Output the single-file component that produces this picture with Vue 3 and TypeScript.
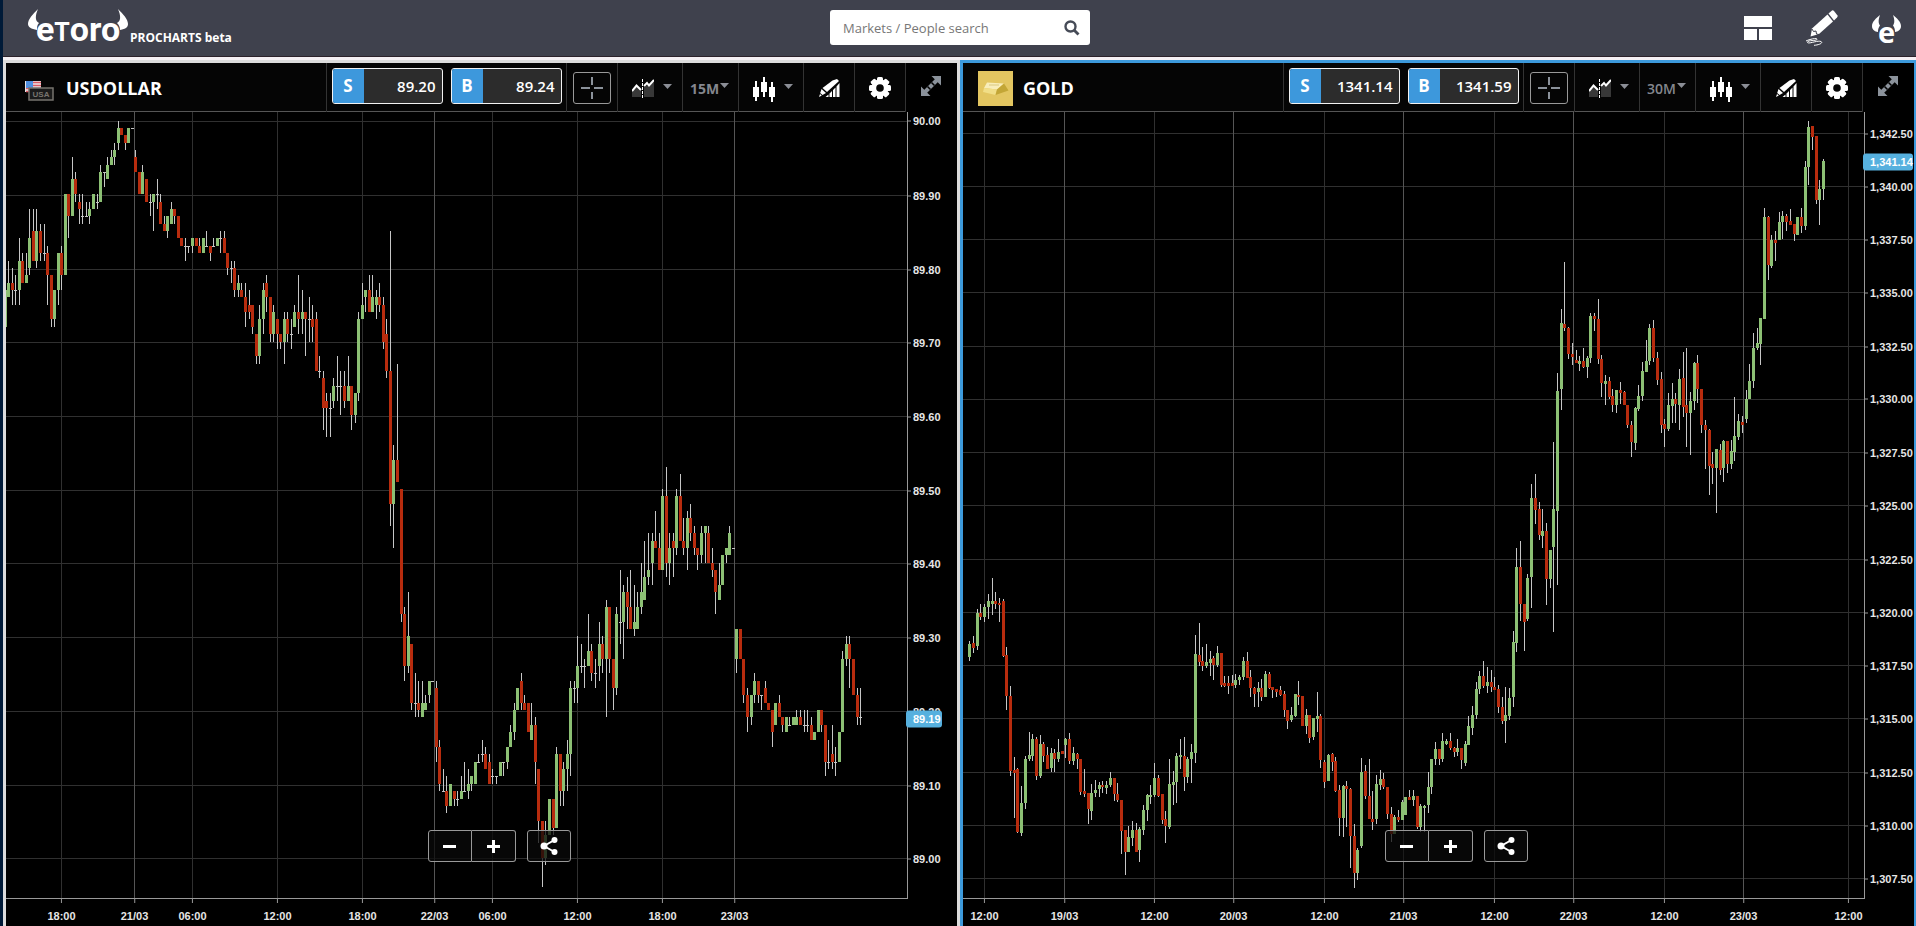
<script setup lang="ts">
import { ref } from 'vue'

interface AxisMark {
  at: number
  text: string
  strong?: boolean
}

interface Bar {
  x: number
  wickY: number
  wickH: number
  bodyY: number
  bodyH: number
  kind: 'up' | 'down' | 'flat'
}

interface Chart {
  id: string
  name: string
  art: 'dollar' | 'gold'
  sell: string
  buy: string
  frame: string
  active: boolean
  times: AxisMark[]
  prices: AxisMark[]
  last: AxisMark
  bars: Bar[]
}

const PLOT_W = 901
const PLOT_H = 786
const frames = ['1M', '5M', '15M', '30M', '1H', '4H', '1D']
const query = ref('')

// Each entry is "high open close low", counted in steps down from the origin price.
function toBars(series: string, firstX: number, stepX: number, originY: number, stepY: number): Bar[] {
  return series
    .trim()
    .split(/\s*[,\n]\s*/)
    .filter((entry) => entry.length > 0)
    .map((entry, index) => {
      const [high, open, close, low] = entry.split(' ').map((v) => Math.floor(originY + Number(v) * stepY))
      const top = Math.min(open, close)
      return {
        x: Math.floor(firstX + index * stepX),
        wickY: high,
        wickH: Math.max(low - high, 1),
        bodyY: top,
        bodyH: Math.max(Math.abs(open - close), 1),
        kind: open === close ? 'flat' : close < open ? 'up' : 'down',
      }
    })
}

const dollarSeries = `
23 28 23 28,19 24 22 24,20 22 23 25,21 23 23 25,16 23 19 25,18 19 22 22,18 22 21 22,12 20 16 21
12 15 19 19,12 19 15 20,14 15 18 19,14 18 18 19,17 18 21 25,21 21 27 28,23 27 23 28,18 23 18 25
17 18 21 23,10 21 10 21,10 10 13 16,5 13 8 13,7 8 10 11,10 11 12 14,10 13 13 14,11 13 13 13
11 13 12 14,10 12 10 12,10 11 11 12,6 11 7 11,7 7 7 9,5 8 6 8,4 6 5 6,3 5 4 6
0 3 1 4,1 1 2 2,2 2 3 4,1 3 1 3,1 1 1 1,4 5 7 7,7 7 10 10,6 10 7 10
8 8 11 11,10 11 11 13,10 11 10 15,8 10 10 12,10 11 14 14,13 14 15 15,13 15 13 16,11 14 12 14
12 12 13 14,13 13 16 16,16 16 17 17,16 17 17 19,17 17 17 18,16 17 16 18,16 16 17 17,16 17 18 18
16 18 16 18,15 17 17 17,17 17 18 19,16 17 17 17,16 17 16 17,15 16 16 18,15 16 18 18,18 18 20 21
19 20 20 22,19 20 23 24,21 23 22 24,22 23 24 24,22 24 26 28,23 25 26 27,25 25 28 29,29 29 32 33
25 32 27 33,22 27 23 29,21 22 24 26,24 24 29 30,25 29 26 30,27 27 29 31,29 29 30 31,26 30 27 33
26 27 29 30,27 29 29 31,25 28 26 28,21 26 27 29,23 27 26 29,26 26 27 32,24 27 27 30,25 27 28 30
26 27 34 34,32 34 34 35,34 35 39 42,37 38 39 43,37 39 39 43,35 38 36 39,32 36 36 38,34 36 36 40
34 36 38 39,32 38 36 38,36 36 40 42,37 40 37 41,26 37 27 38,22 27 25 27,23 24 23 26,21 23 26 26
21 26 24 26,23 25 24 27,22 24 25 26,24 25 30 31,27 29 34 35,15 34 52 55,44 52 46 58,33 46 49 49
50 50 67 68,66 67 74 76,64 74 70 75,71 71 79 80,75 79 79 81,76 79 80 81,76 81 79 81,78 80 79 80
76 78 76 79,76 76 76 76,76 77 85 87,84 85 90 91,88 91 91 91,89 91 93 94,90 93 90 93,91 91 92 93
91 92 92 93,89 92 91 92,87 91 91 91,88 91 90 92,89 90 89 91,87 90 87 90,86 87 87 87,84 86 86 87
85 86 88 88,86 87 90 90,88 89 89 90,89 89 89 90,87 89 87 89,87 87 87 89,85 87 85 88,82 85 83 85
79 83 80 84,77 80 77 80,75 76 79 80,78 79 80 80,79 79 83 83,79 84 82 84,81 82 87 90,88 88 95 98
95 95 100 104,95 100 97 101,92 97 92 97,92 92 96 97,85 96 86 96,86 86 91 93,87 91 88 93,84 88 86 91
76 86 77 89,76 77 77 79,70 77 74 79,71 74 74 75,73 74 74 77,67 74 72 74,71 72 75 76,73 75 75 77
68 74 71 76,70 71 73 75,65 73 66 81,66 66 73 75,73 73 77 80,66 77 67 78,61 68 68 71,63 68 64 73
62 64 66 69,61 66 69 69,63 69 68 70,64 69 66 69,60 66 64 67,57 65 62 65,56 62 61 63,56 60 57 63
53 57 58 58,56 58 61 61,50 61 51 61,47 51 60 62,56 60 58 63,56 57 58 62,50 58 51 59,48 51 57 57
54 57 58 59,53 58 54 61,52 54 56 57,55 56 58 59,58 58 59 61,55 59 56 60,55 56 55 60,55 56 60 60
58 60 61 62,61 61 64 67,60 65 63 65,59 63 59 63,58 59 58 60,55 59 56 59,58 58 58 58,69 73 69 75
69 69 73 73,73 73 78 79,77 78 81 83,78 81 78 82,75 78 76 79,76 76 78 79,78 78 78 80,76 77 79 79
79 79 80 80,80 80 83 85,79 82 79 82,78 79 81 81,81 81 82 83,81 83 81 83,81 82 82 82,81 82 81 82
80 82 81 82,80 81 82 82,80 82 82 83,80 82 82 83,81 82 84 84,83 84 83 84,80 83 80 83,80 80 82 83
82 82 87 89,84 87 87 88,82 86 87 88,85 87 87 89,83 87 83 87,72 83 73 83,70 73 71 74,70 71 73 77
73 73 78 78,77 78 81 82,77 81 81 82
`

const goldSeries = `
529 545 532 549,524 531 536 541,497 534 501 538,492 501 505 508,492 505 495 510,482 495 489 507
466 492 489 503,480 489 492 497,486 491 493 510,487 489 544 545,535 543 584 598,574 584 659 664
645 658 661 706,656 657 720 721,674 721 691 724,644 691 647 697,620 647 643 649,622 644 627 649
625 627 664 668,623 664 632 666,630 632 644 650,635 643 657 657,636 656 641 660,637 641 647 660
627 647 640 650,639 639 642 642,626 633 627 646,621 627 649 652,635 649 641 653,641 642 647 657
647 647 680 683,657 679 682 685,681 681 697 712,672 699 681 708,668 681 678 685,670 677 673 685
669 673 675 681,669 676 673 682,660 673 666 675,666 666 682 689,671 682 688 690,688 688 719 742
718 718 740 763,714 740 725 740,709 726 718 734,711 718 740 740,715 738 717 750,693 718 698 723
682 698 683 709,673 685 683 692,651 683 666 685,663 666 684 685,682 682 708 712,699 707 714 731
647 715 672 717,659 673 670 693,641 670 644 691,627 645 643 657,625 644 665 679,645 665 647 671
632 647 640 671,523 641 542 651,511 543 550 554,535 549 554 559,532 554 550 556,539 551 547 564
544 546 553 568,534 553 541 555,541 541 573 575,564 571 574 575,564 571 574 582,563 571 574 574
562 573 568 576,563 568 565 573,545 565 549 568,540 549 566 566,558 565 576 585,575 576 582 595
570 580 576 595,567 576 585 589,559 585 562 585,560 562 576 577,575 575 578 586,577 577 580 585
574 578 583 584,579 582 598 605,598 598 609 617,595 608 603 610,582 604 582 605,569 583 585 593
584 584 614 614,597 614 603 622,603 603 626 631,606 625 606 628,580 607 604 620,602 604 648 656
648 650 670 676,642 669 643 669,641 642 650 659,645 649 679 680,673 678 706 724,673 706 674 725
669 674 677 715,676 677 724 756,712 724 761 776,736 761 738 768,646 734 660 736,653 659 684 687
647 684 707 707,679 707 710 718,663 707 672 712,658 673 667 678,661 667 675 677,675 675 702 707
695 702 722 730,703 722 705 722,698 705 708 710,688 708 690 708,685 703 685 703,678 685 688 688
678 688 684 694,684 684 715 717,692 715 694 720,693 696 694 720,660 693 675 701,647 675 647 682
630 647 637 653,637 637 647 653,621 647 629 650,627 632 629 633,621 629 636 638,635 636 640 645
627 640 636 644,636 636 648 657,629 651 632 654,604 633 614 633,594 616 603 623,570 603 577 607
559 577 564 582,549 564 574 576,555 574 570 581,558 570 575 580,565 575 578 578,573 577 595 601
585 595 609 612,575 609 603 631,576 604 586 608,519 585 530 595,436 531 455 540,429 455 492 509
492 492 510 539,462 507 466 509,372 465 386 496,362 386 398 412,390 397 423 428,397 424 419 436
411 419 467 493,438 467 438 476,330 435 397 520,261 399 279 473,197 277 211 298,150 212 216 219
215 216 242 247,231 242 245 253,238 248 251 251,244 252 249 259,236 249 255 256,244 255 246 266
201 246 204 251,201 204 207 219,187 207 247 252,243 247 271 285,263 272 269 293,265 269 285 287
277 284 293 300,278 293 278 301,270 278 281 292,279 280 293 293,293 293 313 316,309 313 330 345
295 331 296 338,273 297 284 299,250 284 259 289,228 260 249 260,212 249 216 253,208 216 246 250
240 246 268 273,260 267 313 321,307 312 317 335,281 317 293 319,271 294 287 311,281 287 292 311
257 293 267 318,240 266 295 305,236 293 301 335,280 301 289 343,250 289 251 298,243 251 277 291
277 277 313 321,308 313 318 357,317 318 354 383,340 352 356 372,337 356 337 401,332 338 358 363
328 356 329 370,329 329 352 361,328 352 339 357,285 340 324 349,302 325 309 328,304 310 313 321
278 307 287 311,252 287 269 287,221 269 236 276,216 236 231 238,206 232 206 253,96 207 105 207
104 105 153 168,123 154 128 156,119 128 131 149,100 128 110 128,99 110 104 127,102 104 110 119
97 109 113 113,112 112 122 129,105 123 105 123,96 105 114 121,49 114 55 118,9 55 15 73
14 14 25 38,24 24 88 92,68 88 77 113,47 77 49 88
`

const charts = ref<Chart[]>([
  {
    id: 'usdollar',
    name: 'USDOLLAR',
    art: 'dollar',
    sell: '89.20',
    buy: '89.24',
    frame: '15M',
    active: false,
    times: [
      { at: 55, text: '18:00' },
      { at: 128, text: '21/03', strong: true },
      { at: 186, text: '06:00' },
      { at: 271, text: '12:00' },
      { at: 356, text: '18:00' },
      { at: 428, text: '22/03', strong: true },
      { at: 486, text: '06:00' },
      { at: 571, text: '12:00' },
      { at: 656, text: '18:00' },
      { at: 728, text: '23/03', strong: true },
    ],
    prices: [
      { at: 9, text: '90.00' },
      { at: 83, text: '89.90' },
      { at: 157, text: '89.80' },
      { at: 230, text: '89.70' },
      { at: 304, text: '89.60' },
      { at: 378, text: '89.50' },
      { at: 451, text: '89.40' },
      { at: 525, text: '89.30' },
      { at: 599, text: '89.20' },
      { at: 673, text: '89.10' },
      { at: 746, text: '89.00' },
    ],
    last: { at: 606, text: '89.19' },
    bars: toBars(dollarSeries, -0.88, 3.535, 9, 7.37),
  },
  {
    id: 'gold',
    name: 'GOLD',
    art: 'gold',
    sell: '1341.14',
    buy: '1341.59',
    frame: '30M',
    active: true,
    times: [
      { at: 21, text: '12:00' },
      { at: 101, text: '19/03', strong: true },
      { at: 191, text: '12:00' },
      { at: 270, text: '20/03', strong: true },
      { at: 361, text: '12:00' },
      { at: 440, text: '21/03', strong: true },
      { at: 531, text: '12:00' },
      { at: 610, text: '22/03', strong: true },
      { at: 701, text: '12:00' },
      { at: 780, text: '23/03', strong: true },
      { at: 885, text: '12:00' },
    ],
    prices: [
      { at: 21, text: '1,342.50' },
      { at: 74, text: '1,340.00' },
      { at: 127, text: '1,337.50' },
      { at: 180, text: '1,335.00' },
      { at: 234, text: '1,332.50' },
      { at: 287, text: '1,330.00' },
      { at: 340, text: '1,327.50' },
      { at: 393, text: '1,325.00' },
      { at: 447, text: '1,322.50' },
      { at: 500, text: '1,320.00' },
      { at: 553, text: '1,317.50' },
      { at: 606, text: '1,315.00' },
      { at: 660, text: '1,312.50' },
      { at: 713, text: '1,310.00' },
      { at: 766, text: '1,307.50' },
    ],
    last: { at: 49, text: '1,341.14' },
    bars: toBars(goldSeries, 6.87, 3.696, 0, 1),
  },
])

const left = (mark: AxisMark) => ({ left: `${((mark.at + 0.5) / PLOT_W) * 100}%` })
const top = (mark: AxisMark) => ({ top: `${((mark.at + 0.5) / PLOT_H) * 100}%` })
</script>

<template>
  <div class="page">
    <header class="masthead">
      <a class="brand" href="#" aria-label="eToro ProCharts beta">
        <span class="logo">
          <svg class="horns" viewBox="0 0 102 34" aria-hidden="true">
            <path d="M10 0C5 5 0 10 0 15c0 3 3 5 9 6 0-3 0-5 2-7-4-2-4-7-1-14z" />
            <path d="M90 0c5 5 10 10 10 15 0 3-2 5-8 6 0-3-1-5-3-7 4-2 4-7 1-14z" />
          </svg>
          <span class="word">e<span class="cap">T</span>oro</span>
        </span>
        <span class="product">PROCHARTS beta</span>
      </a>
      <form class="search" role="search" @submit.prevent>
        <input id="market-search" v-model="query" type="text" aria-label="Markets / People search" placeholder="Markets / People search" />
        <button type="submit" aria-label="Search">
          <svg width="16" height="16" viewBox="0 0 16 16">
            <circle cx="6.5" cy="6.5" r="5" fill="none" stroke="#464b57" stroke-width="2.4" />
            <path d="M10 10l4.5 4.5" stroke="#464b57" stroke-width="2.8" />
          </svg>
        </button>
      </form>
      <nav class="actions" aria-label="Workspace">
        <button type="button" aria-label="Chart layout">
          <svg width="28" height="24" viewBox="0 0 28 24" fill="#fff" shape-rendering="crispEdges">
            <rect width="28" height="11" />
            <rect y="13" width="13" height="11" />
            <rect x="15" y="13" width="13" height="11" />
          </svg>
        </button>
        <button type="button" aria-label="Draw">
          <svg width="34" height="36" viewBox="0 0 34 36">
            <path d="M23.500 3.500L27 0.500Q28 0 29 1L32.500 5.500Q33 6.500 32 7.500L29 10.500z" fill="#fff" />
            <path d="M22.500 4.500L28 11.500L14 24L5.500 26.500L7 18.500z" fill="#fff" />
            <path d="M7 19l1.500 2.500 2.500-.5.500 3 2.500.500" fill="none" stroke="#3f414d" stroke-width="1" />
            <path d="M1 31C5 29 13 27.500 12 29.500C11 31 3 30 2.500 32C2 35 12 30 16 31.500C18.500 33 14 35 9 35.300" fill="none" stroke="#fff" stroke-width="1" />
          </svg>
        </button>
        <button type="button" class="bull" aria-label="Account">
          <svg width="29" height="27" viewBox="0 0 29 27" fill="#fff">
            <path d="M8 0C4 3 0 7 0 11s3 5.500 6 6c0-3 .5-4.500 2-6.500C6 8 6.500 4 8 0z" />
            <path d="M21 0c4 3 8 7 8 11s-3 5.500-6 6c0-3-.5-4.500-2-6.500C23 8 22.500 4 21 0z" />
          </svg>
          <span class="bull-letter" aria-hidden="true">e</span>
        </button>
      </nav>
    </header>

    <main class="workspace">
      <section v-for="chart in charts" :key="chart.id" class="panel" :class="{ active: chart.active }" :aria-label="chart.name">
        <div class="toolbar">
          <div class="instrument">
            <span class="thumb">
              <svg v-if="chart.art === 'dollar'" width="35" height="35" viewBox="0 0 35 35">
                <rect x="4" y="10" width="16" height="11" fill="#e9e6e8" />
                <path d="M10 11.500h10M10 14.500h10M5 17.500h15M5 20.500h4" stroke="#dc5a64" stroke-width="1.500" />
                <rect x="5" y="10" width="7" height="7" fill="#4f8fe0" />
                <rect x="8" y="17" width="24" height="12" fill="#1b1b1b" stroke="#77746f" stroke-width="1.500" />
                <text x="20" y="26" text-anchor="middle" class="coin">USA</text>
              </svg>
              <svg v-else width="35" height="35" viewBox="0 0 35 35">
                <rect width="35" height="35" fill="#e3c661" />
                <path d="M9 11.500L26 12.500L19 18.500L6 17z" fill="#f8edba" />
                <path d="M6 17L19 18.500L17.500 24L5 21z" fill="#f1de87" />
                <path d="M26 12.500L30.500 19.500L17.500 24L19 18.500z" fill="#c3a636" />
                <path d="M11 14h10" stroke="#d9c880" stroke-width="1" />
              </svg>
            </span>
            <h2>{{ chart.name }}</h2>
          </div>
          <div class="cell quotes">
            <button type="button" class="quote"><b>S</b><span>{{ chart.sell }}</span></button>
            <button type="button" class="quote"><b>B</b><span>{{ chart.buy }}</span></button>
          </div>
          <div class="cell">
            <button type="button" class="cross" aria-label="Crosshair">
              <svg width="22" height="22" viewBox="0 0 22 22" shape-rendering="crispEdges">
                <path d="M0 11h9M13 11h9M11 0v8M11 15v7" stroke="#8b929b" stroke-width="2" />
              </svg>
            </button>
          </div>
          <button type="button" class="cell wide" aria-label="Compare" aria-haspopup="menu">
            <svg width="22" height="20" viewBox="0 0 22 20">
              <path d="M0 12L5 7L9 11V18H0z M12 8L17 5L22 3V18H12z" fill="#383838" />
              <path d="M0 12L4.500 6.500L9 11M12 7L15 4L17 6.500L22 1" fill="none" stroke="#fff" stroke-width="2" />
              <path d="M10.500 0v20" stroke="#fff" stroke-dasharray="3 1" />
            </svg>
            <svg class="caret" width="9" height="5" viewBox="0 0 9 5"><path d="M0 0h9L4.500 5z" /></svg>
          </button>
          <div class="cell interval">
            <select v-model="chart.frame" :class="{ light: chart.active }" aria-label="Candle interval">
              <option v-for="frame in frames" :key="frame">{{ frame }}</option>
            </select>
            <svg class="caret" width="9" height="5" viewBox="0 0 9 5"><path d="M0 0h9L4.500 5z" /></svg>
          </div>
          <button type="button" class="cell wide" aria-label="Chart type" aria-haspopup="menu">
            <svg width="22" height="25" viewBox="0 0 22 25" fill="#fff" shape-rendering="crispEdges">
              <path d="M0 10h2V4h2v6h2v10H4v4H2v-4H0zM8 5h2V0h2v5h2v10h-2v5h-2v-5H8zM16 10h2V5h2v5h2v10h-2v5h-2v-5h-2z" />
            </svg>
            <svg class="caret" width="9" height="5" viewBox="0 0 9 5"><path d="M0 0h9L4.500 5z" /></svg>
          </button>
          <button type="button" class="cell" aria-label="Drawing tools">
            <svg width="21" height="18" viewBox="0 0 21 18" fill="#fff">
              <path d="M13.500 1.500L18 0L20 2L8 13L3.500 9z" />
              <path d="M2.500 10L7 14L3.500 16L1.200 14z" />
              <path d="M0 18l1-3L2.800 16.500z" />
              <path d="M6.500 18l3-2.500V18zM10.500 18v-3.500l2.500-2.500v6zM14 18v-7l2.500-2.500V18zM17.500 18V7.500L20.500 4v14z" />
            </svg>
          </button>
          <button type="button" class="cell" aria-label="Settings">
            <svg width="22" height="22" viewBox="0 0 22 22">
              <g fill="#fff">
                <rect v-for="n in 4" :key="n" x="8" y="0" width="6" height="22" rx="1.500" :transform="`rotate(${n * 45} 11 11)`" />
                <circle cx="11" cy="11" r="8.500" />
              </g>
              <circle cx="11" cy="11" r="3.800" fill="#060606" />
            </svg>
          </button>
          <button type="button" class="cell expand" aria-label="Expand">
            <svg width="20" height="20" viewBox="0 0 20 20">
              <path d="M10.500 0H20V9.500zM0 10.500V20H9.500z" fill="#8b929b" />
              <path d="M16 4L4 16" stroke="#8b929b" stroke-width="4" />
              <path d="M10.500 6.500l3 3M6.500 10.500l3 3" stroke="#000" stroke-width="1.500" />
            </svg>
          </button>
        </div>

        <div class="chart">
          <div class="plot">
            <svg :viewBox="`0 0 ${PLOT_W} ${PLOT_H}`" preserveAspectRatio="none" shape-rendering="crispEdges" role="img" :aria-label="`${chart.name} candles`">
              <rect v-for="mark in chart.prices" :key="mark.text" class="grid" x="0" :y="mark.at" :width="PLOT_W" height="1" />
              <rect v-for="mark in chart.times" :key="mark.at" class="grid" :class="{ strong: mark.strong }" :x="mark.at" y="0" width="1" :height="PLOT_H" />
              <g v-for="(bar, i) in chart.bars" :key="i">
                <rect class="wick" :x="bar.x" :y="bar.wickY" width="1" :height="bar.wickH" />
                <rect :class="bar.kind" :x="bar.x - 1" :y="bar.bodyY" width="3" :height="bar.bodyH" />
              </g>
            </svg>
          </div>
          <div class="price-axis">
            <span v-for="mark in chart.prices" :key="mark.text" class="price" :style="top(mark)">{{ mark.text }}</span>
            <output class="last" :style="top(chart.last)">{{ chart.last.text }}</output>
          </div>
          <div class="time-axis">
            <span v-for="mark in chart.times" :key="mark.at" class="time" :style="left(mark)">{{ mark.text }}</span>
          </div>
          <div class="dock">
            <div class="zoom">
              <button type="button" aria-label="Zoom out">
                <svg width="13" height="13" viewBox="0 0 13 13"><path d="M0 6.500h13" stroke="#fff" stroke-width="3" /></svg>
              </button>
              <button type="button" aria-label="Zoom in">
                <svg width="13" height="13" viewBox="0 0 13 13"><path d="M0 6.500h13M6.500 0v13" stroke="#fff" stroke-width="3" /></svg>
              </button>
            </div>
            <button type="button" class="share" aria-label="Share">
              <svg width="18" height="18" viewBox="0 0 18 18" fill="#fff">
                <path d="M14.500 3L4 9l10.500 6" fill="none" stroke="#fff" stroke-width="2" />
                <circle cx="14.500" cy="3" r="3" /><circle cx="4" cy="9" r="3.500" /><circle cx="14.500" cy="15" r="3" />
              </svg>
            </button>
          </div>
        </div>
      </section>
    </main>
  </div>
</template>

<style>
body {
  margin: 0;
  background: #000;
}
</style>

<style scoped>
.page {
  box-sizing: border-box;
  display: flex;
  flex-direction: column;
  height: 100vh;
  border-left: 3px solid #001a38;
  background: #dcdcdc;
  color: #fff;
  font-family: "Open Sans", "Noto Sans", sans-serif;
  overflow: hidden;
}

button {
  display: flex;
  align-items: center;
  justify-content: center;
  margin: 0;
  padding: 0;
  border: 0;
  background: none;
  color: inherit;
  font: inherit;
  cursor: pointer;
}

svg {
  display: block;
  flex: none;
}

.masthead {
  box-sizing: border-box;
  flex: none;
  display: grid;
  grid-template-columns: 1fr 260px 1fr;
  align-items: center;
  height: 57px;
  padding-left: 1px;
  border-bottom: 1px solid #2c222b;
  background: #3f414d;
}

.brand {
  display: flex;
  align-items: flex-end;
  gap: 2px;
  height: 38px;
  padding-left: 24px;
  color: #fff;
  text-decoration: none;
}

.logo {
  position: relative;
  width: 100px;
  height: 38px;
}

.horns {
  position: absolute;
  inset: 0 0 auto 0;
  width: 102px;
  height: 34px;
  fill: #fff;
}

.word {
  display: block;
  padding-top: 3px;
  text-align: center;
  font: 700 34px/34px Roboto, "Open Sans", sans-serif;
}

.cap {
  font-size: 25px;
}

.product {
  font-size: 12px;
  font-weight: 700;
  line-height: 16px;
  padding-bottom: 1px;
}

.search {
  display: flex;
  height: 35px;
  border-radius: 3px;
  background: #fff;
  margin-bottom: 1px;
}

.search input {
  flex: 1;
  min-width: 0;
  padding: 0 0 0 13px;
  border: 0;
  background: none;
  outline: none;
  color: #333;
  font: 400 13px "Open Sans", sans-serif;
}

.search input::placeholder {
  color: #777;
  opacity: 1;
}

.search button {
  width: 37px;
}

.actions {
  display: flex;
  align-items: center;
  justify-content: flex-end;
  gap: 33px;
  padding-right: 15px;
}

.bull {
  position: relative;
}

.bull-letter {
  position: absolute;
  inset: -1px 0 auto 0;
  text-align: center;
  font: 700 29px/36px "Open Sans", sans-serif;
}

.workspace {
  flex: 1;
  min-height: 0;
  display: grid;
  grid-template-columns: 1fr 1fr;
  margin-right: -1px;
  border-top: 3px solid #f5f0f4;
}

.panel {
  box-sizing: border-box;
  min-width: 0;
  min-height: 0;
  display: flex;
  flex-direction: column;
  border: solid #dcdcdc;
  border-width: 3px 3px 0;
  background: #000;
}

.panel.active {
  border-color: #3d9adc;
}

.toolbar {
  flex: none;
  display: flex;
  height: 48px;
  margin-right: 1px;
  border-bottom: 1px solid #555;
  background: #050505;
}

.instrument {
  flex: 1;
  min-width: 0;
  display: flex;
  align-items: center;
  gap: 10px;
  padding-left: 15px;
}

.thumb {
  width: 35px;
  padding-top: 3px;
}

.coin {
  font: 700 8px "Liberation Sans", sans-serif;
  fill: #77746f;
}

h2 {
  margin: 0;
  padding-top: 2px;
  font-size: 18px;
  font-weight: 700;
  line-height: 24px;
}

.cell {
  box-sizing: border-box;
  flex: none;
  display: flex;
  align-items: center;
  justify-content: center;
  width: 51px;
  height: 49px;
  border-left: 1px solid #333;
}

.cell.wide {
  width: 65px;
  justify-content: flex-end;
  gap: 9px;
  padding: 3px 10px 0 0;
}

.caret {
  fill: #8b8e96;
  margin-bottom: 5px;
}

.quotes {
  width: 240px;
  gap: 8px;
  padding-bottom: 4px;
}

.quote {
  box-sizing: border-box;
  width: 111px;
  height: 36px;
  border: 1px solid #f2f2f2;
  border-radius: 3px;
  background: #2c2c2c;
  overflow: hidden;
}

.quote b {
  width: 31px;
  background: #3d98dc;
  font-size: 17px;
  line-height: 36px;
}

.quote span {
  flex: 1;
  padding-right: 6px;
  text-align: right;
  font: 600 15px/34px "Open Sans", sans-serif;
}

.cross {
  box-sizing: border-box;
  width: 38px;
  height: 32px;
  border: 1px solid #999;
  border-radius: 3px;
}

.interval {
  position: relative;
  width: 56px;
}

.interval select {
  width: 100%;
  height: 100%;
  padding: 2px 0 0 7px;
  border: 0;
  outline: 0;
  appearance: none;
  background: none;
  color: #84878e;
  font: 700 14px "Open Sans", sans-serif;
}

.interval select.light {
  font-weight: 600;
}

.interval option {
  background: #111;
}

.interval .caret {
  position: absolute;
  right: 9px;
  top: 20px;
  pointer-events: none;
}

.expand {
  padding-bottom: 3px;
  background: #000;
}

.chart {
  position: relative;
  flex: 1;
  min-height: 0;
  display: grid;
  grid-template-columns: 1fr 49px;
  grid-template-rows: 1fr 27px;
}

.plot {
  position: relative;
  min-width: 0;
  min-height: 0;
  border: solid #999;
  border-width: 0 1px 1px 0;
  overflow: hidden;
}

.plot svg {
  position: absolute;
  inset: 0;
  width: 100%;
  height: 100%;
}

.grid {
  fill: #303030;
}

.grid.strong {
  fill: #555;
}

.wick,
.flat {
  fill: #c6c6c6;
}

.up {
  fill: #8cc074;
}

.down {
  fill: #b82c0e;
}

.price-axis,
.time-axis {
  position: relative;
  color: #e6e6e6;
  font: 700 11px/17px "Liberation Sans", Arial, sans-serif;
}

.price-axis {
  margin-bottom: 1px;
}

.time-axis {
  margin-right: 1px;
}

.price {
  position: absolute;
  left: 0;
  display: flex;
  align-items: center;
  gap: 2px;
  translate: 0 -50%;
}

.price::before {
  content: "";
  width: 3px;
  height: 1px;
  background: #999;
}

.last {
  position: absolute;
  left: -2px;
  padding: 0 0 0 7px;
  min-width: 29px;
  border-radius: 3px;
  background: #56b0de;
  color: #fff;
  translate: 0 -50%;
}

.time {
  position: absolute;
  top: 0;
  display: flex;
  flex-direction: column;
  align-items: center;
  gap: 5px;
  translate: -50% 0;
}

.time::before {
  content: "";
  width: 1px;
  height: 4px;
  background: #999;
}

.dock {
  position: absolute;
  left: calc(50% - 54px);
  bottom: 64px;
  display: flex;
  gap: 11px;
}

.zoom {
  display: flex;
}

.dock button {
  box-sizing: border-box;
  width: 44px;
  height: 32px;
  border: 1px solid #999;
  border-radius: 3px;
  background: rgba(10, 10, 10, 0.75);
}

.zoom button:first-child {
  border-radius: 3px 0 0 3px;
}

.zoom button:last-child {
  border-left: 0;
  border-radius: 0 3px 3px 0;
}
</style>
